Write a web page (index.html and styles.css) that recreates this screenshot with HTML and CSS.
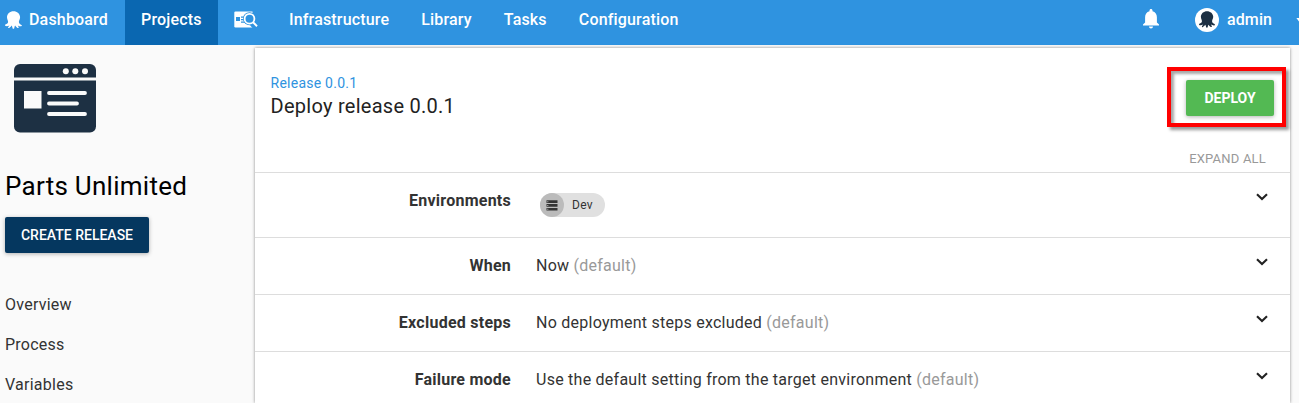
FILE: index.html
```html
<!DOCTYPE html>
<html lang="en">
<head>
<meta charset="utf-8">
<title>Deploy release 0.0.1</title>
<link rel="stylesheet" href="styles.css">
</head>
<body>
<svg class="defs" aria-hidden="true">
  <symbol id="octopus" viewBox="0 0 17 18">
    <path d="M8.500 0.200C4.900 0.200 2 2.800 2 6.200C2 8 3 9.300 3.100 10.700C3.200 12.200 2 13 0.400 13.600C-0.300 13.900 0 15 0.800 15.100C2.100 15.300 3.400 14.900 4.300 14.400C4.200 15 3.600 15.400 3.200 16.200C2.800 17 3.500 17.400 4.200 16.900C5.500 16 6.200 15.500 6.700 14.600C7.100 15.300 7.400 16.100 7.500 17C7.700 18.200 9.200 18.100 9.300 17C9.400 16.100 9.600 15.300 10.100 14.600C10.600 15.500 11.400 16.300 12.500 16.900C13.200 17.400 13.900 16.900 13.600 16.100C13.300 15.500 12.900 15 12.800 14.400C13.700 14.900 14.900 15.400 16.100 15.300C17 15.200 17.100 14.200 16.500 13.900C15.100 13.200 13.800 12.400 13.900 10.700C14 9.300 15.100 8.100 15.100 6.200C15.100 2.800 12.100 0.200 8.500 0.200Z" fill="currentColor"/>
  </symbol>
  <symbol id="chevron" viewBox="0 0 12 8">
    <path d="M1 1.200L6 6L11 1.200" fill="none" stroke="currentColor" stroke-width="2.100"/>
  </symbol>
</svg>

<header class="topbar">
  <nav class="nav">
    <a class="nav-item nav-home"><svg class="home-icon"><use href="#octopus"/></svg>Dashboard</a>
    <a class="nav-item active">Projects</a>
    <a class="nav-item nav-search">
      <svg class="search-icon" viewBox="0 0 24 17">
        <path d="M1.500 0.500H18.500V16.500H1.500Q0.300 16.500 0.300 15.300V1.700Q0.300 0.500 1.500 0.500Z" fill="#fff"/>
        <path d="M2 6h4v4H2zM7 5.500h4v1.200H7zM7 8h3.500v1.200H7zM7 10.500h4.500v1.200H7z" fill="#2f93e0"/>
        <path d="M17.500 13L21 16.500" stroke="#2f93e0" stroke-width="4"/>
        <circle cx="15.500" cy="7.700" r="6.500" fill="#2f93e0"/>
        <circle cx="15.500" cy="7.700" r="4.900" fill="none" stroke="#fff" stroke-width="1.800"/>
        <path d="M19 11.200L23 15.200" stroke="#fff" stroke-width="2"/>
      </svg>
    </a>
    <a class="nav-item">Infrastructure</a>
    <a class="nav-item">Library</a>
    <a class="nav-item">Tasks</a>
    <a class="nav-item">Configuration</a>
  </nav>
  <div class="account">
    <svg class="bell" viewBox="0 0 16 20">
      <path d="M8 0C7.100 0 6.500 0.700 6.500 1.500V2.200C3.600 2.900 2.100 5.300 2.100 8.200V13.500L0 15.600V16.500H16V15.600L13.900 13.500V8.200C13.900 5.300 12.400 2.900 9.500 2.200V1.500C9.500 0.700 8.900 0 8 0ZM6 17.500C6 18.600 6.900 19.500 8 19.500S10 18.600 10 17.500Z" fill="#fff"/>
    </svg>
    <span class="avatar"><svg class="avatar-icon"><use href="#octopus"/></svg></span>
    <span class="user">admin</span>
    <span class="caret"></span>
  </div>
</header>

<div class="page">
  <aside class="sidebar">
    <svg class="project-logo" viewBox="0 0 82 69">
      <rect width="82" height="68.500" rx="6" fill="#1d3043"/>
      <path d="M0 14.900H82" stroke="#fafafa" stroke-width="3"/>
      <g fill="#fafafa"><circle cx="51.800" cy="7.200" r="3"/><circle cx="61.300" cy="7.200" r="3"/><circle cx="71" cy="7.200" r="3"/></g>
      <rect x="10" y="27" width="17.500" height="17.500" fill="#fafafa"/>
      <path d="M35 29H71M35 39.500H63M35 50H71" stroke="#fafafa" stroke-width="3.800" stroke-linecap="round"/>
    </svg>
    <h1 class="project-name">Parts Unlimited</h1>
    <button class="button create">CREATE RELEASE</button>
    <ul class="side-nav">
      <li>Overview</li>
      <li>Process</li>
      <li>Variables</li>
    </ul>
  </aside>

  <main class="card">
    <div class="card-head">
      <div class="titles">
        <a class="crumb">Release 0.0.1</a>
        <h2 class="title">Deploy release 0.0.1</h2>
      </div>
      <div class="actions">
        <div class="highlight"><button class="button deploy">DEPLOY</button></div>
        <a class="expand">EXPAND ALL</a>
      </div>
    </div>
    <section class="row row-env">
      <div class="label">Environments</div>
      <div class="value">
        <span class="chip">
          <span class="chip-icon"><svg class="server" viewBox="0 0 12 11"><path d="M0.500 0.300h11v2.700h-11zM0.500 4.100h11v2.700h-11zM0.500 7.900h11v2.700h-11z" fill="#333"/><path d="M1.300 1.200h1v1h-1zM1.300 5h1v1h-1zM1.300 8.800h1v1h-1z" fill="#bbb"/></svg></span>
          <span class="chip-text">Dev</span>
        </span>
      </div>
      <svg class="chevron"><use href="#chevron"/></svg>
    </section>
    <section class="row">
      <div class="label">When</div>
      <div class="value">Now <span class="muted">(default)</span></div>
      <svg class="chevron"><use href="#chevron"/></svg>
    </section>
    <section class="row">
      <div class="label">Excluded steps</div>
      <div class="value">No deployment steps excluded <span class="muted">(default)</span></div>
      <svg class="chevron"><use href="#chevron"/></svg>
    </section>
    <section class="row row-last">
      <div class="label">Failure mode</div>
      <div class="value">Use the default setting from the target environment <span class="muted">(default)</span></div>
      <svg class="chevron"><use href="#chevron"/></svg>
    </section>
  </main>
</div>
</body>
</html>
```

FILE: styles.css
```css
* { box-sizing: border-box; }

body {
  margin: 0;
  height: 403px;
  overflow: hidden;
  display: flex;
  flex-direction: column;
  background: #fafafa;
  color: #333;
  font: 16px/20px Roboto, sans-serif;
}

.defs { display: none; }
svg { display: block; flex: none; }
h1, h2, ul { margin: 0; padding: 0; font-weight: 400; list-style: none; }

/* Top bar */
.topbar {
  display: flex;
  justify-content: space-between;
  flex: none;
  height: 45px;
  background: #2f93e0;
  color: #fff;
  font-weight: 500;
}
.nav { display: flex; letter-spacing: .17px; }
.nav-item {
  display: flex;
  align-items: center;
  padding: 0 16px 6px;
  white-space: nowrap;
}
.nav-home { width: 125px; padding-left: 5px; gap: 7px; }
.home-icon { width: 17px; height: 18px; }
.active { width: 93px; background: #0a67b1; }
.nav-search { width: 55px; }
.search-icon { width: 24px; height: 17px; }
.account { display: flex; align-items: center; padding-bottom: 6px; }
.bell { width: 16px; height: 20px; margin: 0 36px 2px 0; }
.avatar {
  display: flex;
  align-items: center;
  justify-content: center;
  width: 24px;
  height: 24px;
  margin-right: 8px;
  border-radius: 50%;
  background: #fff;
  color: #1d3043;
}
.avatar-icon { width: 16px; height: 17px; }
.user { width: 45px; letter-spacing: .1px; }
.caret {
  width: 3px;
  height: 4px;
  margin-left: 24px;
  background: #fff;
  clip-path: polygon(0 0, 100% 0, 100% 100%);
}

/* Sidebar */
.page { display: flex; flex: 1; min-height: 0; }
.sidebar { flex: none; width: 255px; padding: 19px 0 0 5px; }
.project-logo { width: 82px; height: 69px; margin-left: 9px; }
.project-name {
  margin-top: 37px;
  color: #000;
  font-size: 26px;
  line-height: 32px;
  letter-spacing: .27px;
}
.button {
  display: block;
  height: 36px;
  padding: 0;
  border: 0;
  border-radius: 2px;
  color: #fff;
  font: 500 14px/36px Roboto, sans-serif;
  box-shadow: 0 1px 4px rgba(0, 0, 0, .3);
}
.create { width: 144px; margin-top: 15px; background: #05375f; }
.side-nav { margin-top: 42px; letter-spacing: .25px; }
.side-nav li { height: 40px; }
.side-nav li:last-child { height: 20px; }

/* Release card */
.card {
  width: 1035px;
  margin-top: 3px;
  background: #fff;
  box-shadow: 0 0 3px rgba(0, 0, 0, .45);
}
.card-head {
  display: flex;
  justify-content: space-between;
  height: 124px;
  padding: 19px 4px 0 15.500px;
}
.titles { padding-top: 6px; }
.crumb {
  display: block;
  color: #2f93e0;
  font-size: 14px;
  letter-spacing: .25px;
}
.title { margin-top: 1px; color: #222; font-size: 20px; line-height: 24px; letter-spacing: .27px; }
.actions { display: flex; flex-direction: column; align-items: flex-end; }
.highlight {
  width: 119px;
  height: 60px;
  padding: 9px 0 0 15px;
  border: 4px solid #f00;
  box-shadow: 3px 3px 3px rgba(0, 0, 0, .4), inset 3px 3px 3px rgba(0, 0, 0, .35);
}
.deploy { width: 88px; background: #53b953; font-weight: 700; }
.expand { margin: 22px 20px 0 0; color: #999; font-size: 13px; letter-spacing: .2px; }

.row {
  display: flex;
  height: 57px;
  padding: 18px 22px 0 0;
  border-top: 1px solid #ddd;
}
.row-env { height: 65px; }
.row-last { height: 52px; }
.label { flex: none; width: 256px; text-align: right; font-weight: 700; letter-spacing: .25px; }
.value { flex: 1; padding-left: 25px; letter-spacing: .25px; }
.muted { color: #999; }
.chevron { width: 12px; height: 8px; margin-top: 2px; color: #222; }
.chip {
  display: flex;
  width: 65px;
  height: 24px;
  margin: 2px 0 0 4px;
  border-radius: 12px;
  background: #e0e0e0;
}
.chip-icon {
  display: flex;
  align-items: center;
  justify-content: center;
  width: 24px;
  height: 24px;
  border-radius: 50%;
  background: #bbb;
}
.server { width: 12px; height: 11px; }
.chip-text { padding-left: 8px; font-size: 12px; line-height: 24px; }
```
